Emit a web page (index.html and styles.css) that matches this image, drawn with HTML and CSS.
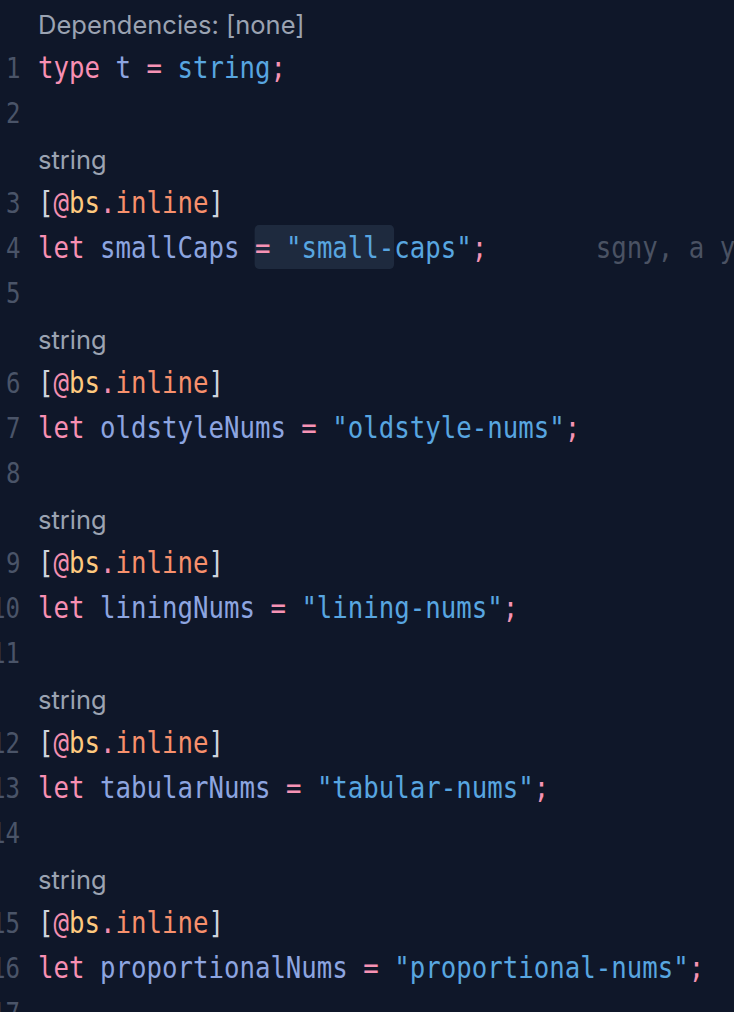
FILE: index.html
```html
<!DOCTYPE html>
<html lang="en">
<head>
<meta charset="utf-8">
<title>Editor</title>
<link rel="stylesheet" href="styles.css">
</head>
<body>
<div class="editor">
  <div class="row note"><span class="gutter"></span><span class="note-text">Dependencies: [none]</span></div>
  <div class="row"><span class="gutter"><span class="num">1</span></span><span class="code"><span class="kw">type</span> <span class="id">t</span> <span class="op">=</span> <span class="str">string</span><span class="op">;</span></span></div>
  <div class="row"><span class="gutter"><span class="num">2</span></span><span class="code"></span></div>

  <div class="row note"><span class="gutter"></span><span class="note-text">string</span></div>
  <div class="row"><span class="gutter"><span class="num">3</span></span><span class="code"><span class="br">[</span><span class="at">@</span><span class="bs">bs</span><span class="at">.</span><span class="attr">inline</span><span class="br">]</span></span></div>
  <div class="row"><span class="gutter"><span class="num">4</span></span><span class="code"><span class="kw">let</span> <span class="id">smallCaps</span> <span class="sel"><span class="op">=</span> <span class="str">"small-</span></span><span class="str">caps"</span><span class="op">;</span><span class="ghost">sgny, a y</span></span></div>
  <div class="row"><span class="gutter"><span class="num">5</span></span><span class="code"></span></div>

  <div class="row note"><span class="gutter"></span><span class="note-text">string</span></div>
  <div class="row"><span class="gutter"><span class="num">6</span></span><span class="code"><span class="br">[</span><span class="at">@</span><span class="bs">bs</span><span class="at">.</span><span class="attr">inline</span><span class="br">]</span></span></div>
  <div class="row"><span class="gutter"><span class="num">7</span></span><span class="code"><span class="kw">let</span> <span class="id">oldstyleNums</span> <span class="op">=</span> <span class="str">"oldstyle-nums"</span><span class="op">;</span></span></div>
  <div class="row"><span class="gutter"><span class="num">8</span></span><span class="code"></span></div>

  <div class="row note"><span class="gutter"></span><span class="note-text">string</span></div>
  <div class="row"><span class="gutter"><span class="num">9</span></span><span class="code"><span class="br">[</span><span class="at">@</span><span class="bs">bs</span><span class="at">.</span><span class="attr">inline</span><span class="br">]</span></span></div>
  <div class="row"><span class="gutter"><span class="num">10</span></span><span class="code"><span class="kw">let</span> <span class="id">liningNums</span> <span class="op">=</span> <span class="str">"lining-nums"</span><span class="op">;</span></span></div>
  <div class="row"><span class="gutter"><span class="num">11</span></span><span class="code"></span></div>

  <div class="row note"><span class="gutter"></span><span class="note-text">string</span></div>
  <div class="row"><span class="gutter"><span class="num">12</span></span><span class="code"><span class="br">[</span><span class="at">@</span><span class="bs">bs</span><span class="at">.</span><span class="attr">inline</span><span class="br">]</span></span></div>
  <div class="row"><span class="gutter"><span class="num">13</span></span><span class="code"><span class="kw">let</span> <span class="id">tabularNums</span> <span class="op">=</span> <span class="str">"tabular-nums"</span><span class="op">;</span></span></div>
  <div class="row"><span class="gutter"><span class="num">14</span></span><span class="code"></span></div>

  <div class="row note"><span class="gutter"></span><span class="note-text">string</span></div>
  <div class="row"><span class="gutter"><span class="num">15</span></span><span class="code"><span class="br">[</span><span class="at">@</span><span class="bs">bs</span><span class="at">.</span><span class="attr">inline</span><span class="br">]</span></span></div>
  <div class="row"><span class="gutter"><span class="num">16</span></span><span class="code"><span class="kw">let</span> <span class="id">proportionalNums</span> <span class="op">=</span> <span class="str">"proportional-nums"</span><span class="op">;</span></span></div>
  <div class="row"><span class="gutter"><span class="num">17</span></span><span class="code"></span></div>
</div>
</body>
</html>
```

FILE: styles.css
```css
html, body {
  margin: 0;
  padding: 0;
  background: #0f1729;
  overflow: hidden;
  height: 100%;
}

.editor {
  padding-top: 0;
  display: flex;
  flex-direction: column;
}

.row {
  display: flex;
  align-items: center;
  height: 45px;
  white-space: pre;
}

.gutter {
  flex: 0 0 20px;
  width: 20px;
  min-width: 0;
  display: flex;
  justify-content: flex-end;
  margin-right: 18px;
}

.num {
  flex: none;
  display: inline-block;
  font-family: "DejaVu Sans Mono", monospace;
  font-size: 29px;
  color: #4a5468;
  transform: scaleX(0.83);
  transform-origin: right center;
}

.code {
  display: inline-block;
  font-family: "DejaVu Sans Mono", monospace;
  font-size: 31px;
  line-height: 45px;
  color: #cdd3dc;
  transform: scaleX(0.83);
  transform-origin: left center;
}

.note-text {
  font-family: Inter, "Noto Sans", sans-serif;
  font-size: 25.5px;
  color: #9ba3b2;
  padding-top: 4px;
}

.kw { color: #f88fb3; }
.id { color: #8da5e0; }
.op { color: #f693b4; }
.str { color: #58a6e0; }
.br { color: #cdd3dc; }
.at { color: #f48fb1; }
.bs { color: #fdc97f; }
.attr { color: #f7906c; }
.ghost { color: #4a5263; margin-left: 7ch; }

.sel {
  background: #1e2a3e;
  border-radius: 5px;
  padding: 0;
  display: inline-block;
  line-height: 44px;
}
```
